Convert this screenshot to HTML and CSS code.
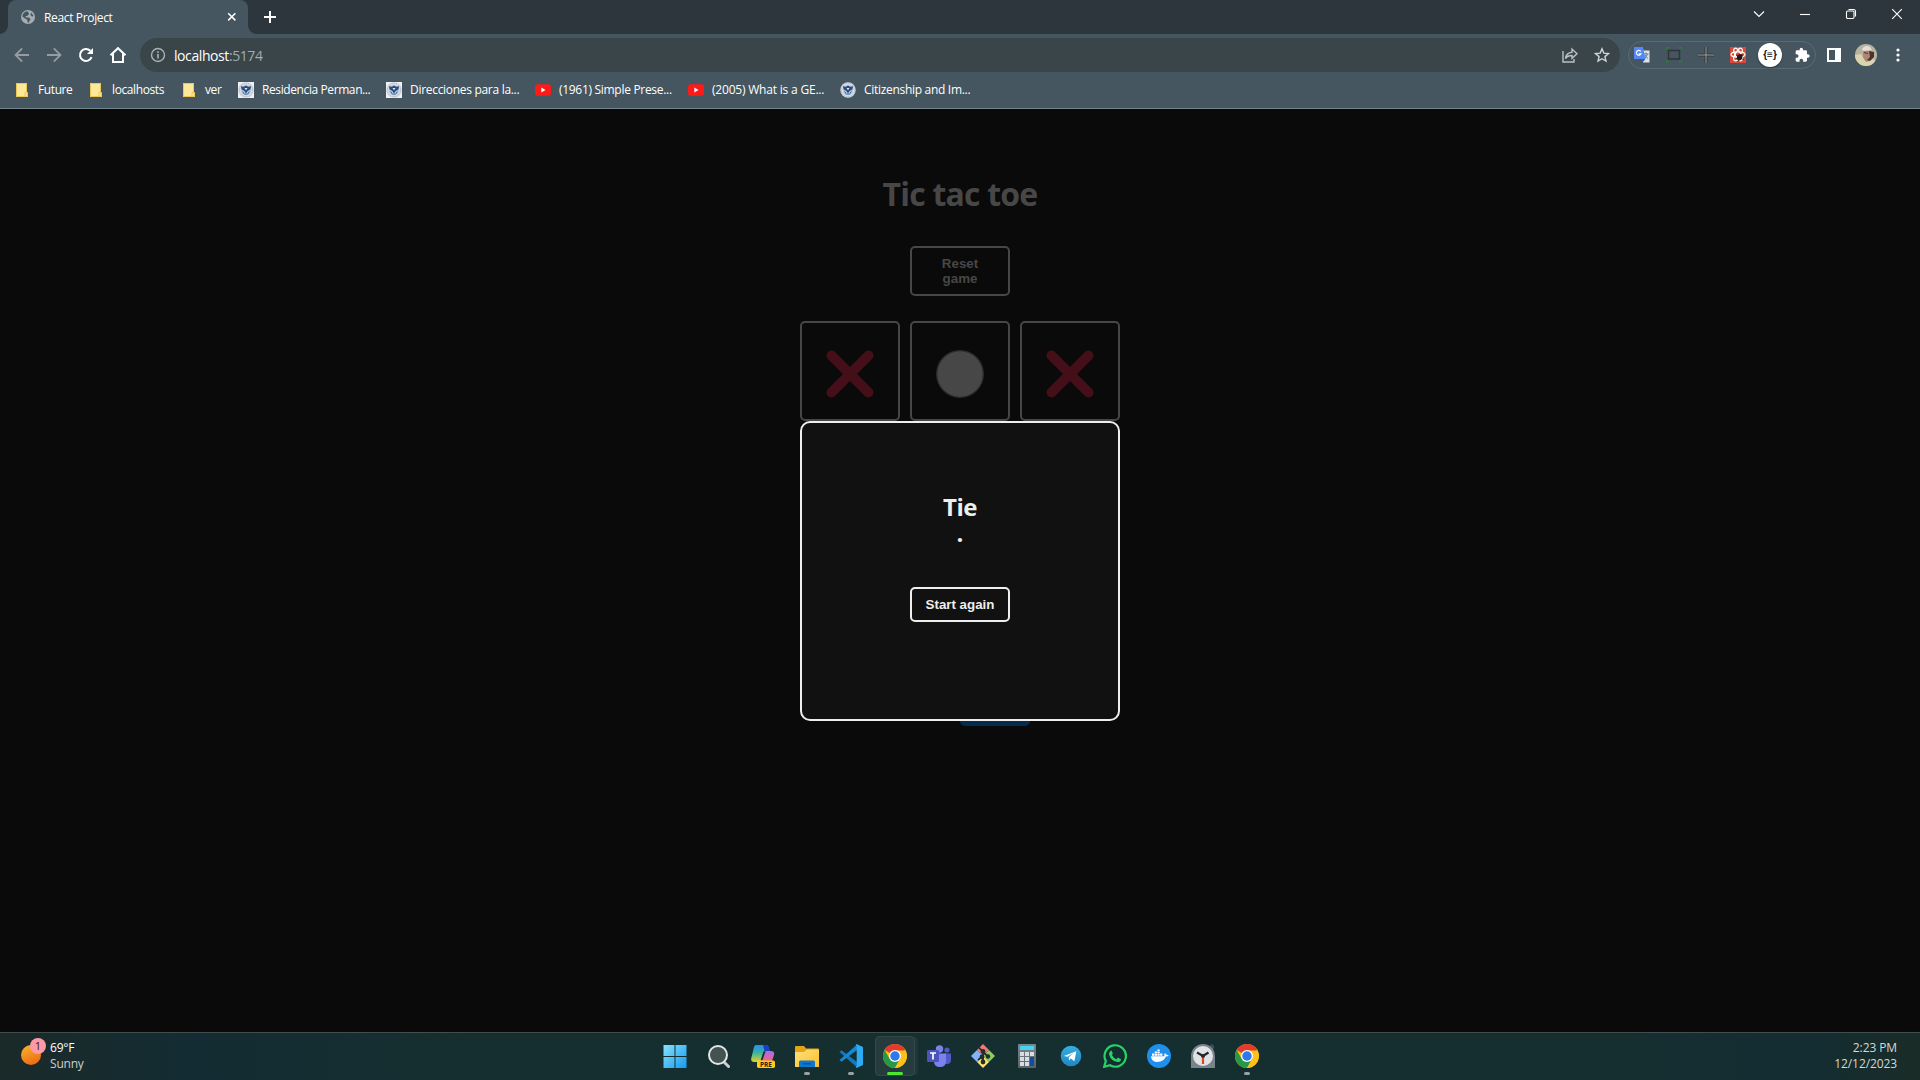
FILE: index.html
```html
<!DOCTYPE html>
<html lang="en">
<head>
<meta charset="utf-8">
<title>React Project</title>
<link rel="stylesheet" href="styles.css">
</head>
<body>
<svg class="defs" width="0" height="0" aria-hidden="true">
  <defs>
    <linearGradient id="win" gradientUnits="userSpaceOnUse" x1="0" y1="0" x2="24" y2="24"><stop offset="0" stop-color="#8ce3fd"/><stop offset="1" stop-color="#1399f0"/></linearGradient>
    <linearGradient id="sun" x1="0.2" y1="0" x2="0.6" y2="1"><stop offset="0" stop-color="#f5b32e"/><stop offset="1" stop-color="#ee6a12"/></linearGradient>
    <linearGradient id="folderFill" x1="0" y1="0" x2="1" y2="1"><stop offset="0" stop-color="#ffe07c"/><stop offset="1" stop-color="#fdbf2a"/></linearGradient>
    <linearGradient id="copA" x1="0" y1="0" x2="0" y2="1"><stop offset="0" stop-color="#2b8ff0"/><stop offset=".45" stop-color="#35b3a0"/><stop offset="1" stop-color="#e0d22e"/></linearGradient>
    <linearGradient id="copB" x1="0" y1="0" x2="0" y2="1"><stop offset="0" stop-color="#a66cf0"/><stop offset="1" stop-color="#f2657f"/></linearGradient>
    <linearGradient id="calcBody" x1="0" y1="0" x2="0" y2="1"><stop offset="0" stop-color="#7d868d"/><stop offset="1" stop-color="#59636b"/></linearGradient>
    <linearGradient id="tele" x1="0" y1="0" x2="0" y2="1"><stop offset="0" stop-color="#37aee2"/><stop offset="1" stop-color="#1e88c4"/></linearGradient>
    <symbol id="folder" viewBox="0 0 16 16"><path d="M2 1h11v9.500h1V15H2z" fill="#ffe799"/><path d="M2.500 1.500h10V10M2.500 1.500v13H13.500V10.500h-2.500v4" fill="none" stroke="#e9c856"/></symbol>
    <symbol id="seal" viewBox="0 0 16 16"><circle cx="8" cy="8" r="7.700" fill="#d9dde6"/><circle cx="8" cy="8" r="6.800" fill="none" stroke="#a3a8b8" stroke-dasharray="1 1"/><circle cx="8" cy="8" r="5.300" fill="#b9cbdd"/><path d="M2.800 4.200 6 4.800l2-1.300 2 1.300 3.200-.6-.9 3.300-2.300 1.200L8 11 6 8.700 3.700 7.500z" fill="#2a4c80"/><path d="M6.500 6h3L8 8.300z" fill="#e6edf5"/><path d="M4.700 9.500l1.800 3M11.300 9.500l-1.800 3M8 10v3" stroke="#3d6797"/></symbol>
    <symbol id="youtube" viewBox="0 0 16 16"><rect y="2.300" width="16" height="11.400" rx="2.600" fill="#ff1a1a"/><path d="M6.300 5.500v5L10.500 8z" fill="#fff"/></symbol>
    <symbol id="chrome" viewBox="0 0 48 48"><circle cx="24" cy="24" r="24" fill="#fbc116"/><path d="M24 24 3.200 12A24 24 0 0 1 44.800 12z" fill="#e33b2e"/><path d="M3.200 12A24 24 0 0 0 24 48L34.400 30 24 24 13.600 30z" fill="#279847"/><path d="M24 13h20.800A24 24 0 0 1 24 48l10-18z" fill="#fcc21b"/><circle cx="24" cy="24" r="12" fill="#fff"/><circle cx="24" cy="24" r="9.500" fill="#2e78ee"/></symbol>
  </defs>
</svg>

<header class="browser">
  <div class="tabstrip">
    <div class="tab">
      <svg width="14" height="14" viewBox="0 0 14 14"><circle cx="7" cy="7" r="7" fill="#a4adb2"/><path d="M6.500 1.300 8 3.500l-1 2-2.500.8L5 7.500h3l1.500 1.800-2 3.400-1-.1V10L4.500 8.800 1.300 6.500A6 6 0 0 1 6.500 1.300zM10 2.500l2.500 3.300-1.300 1L9.500 5z" fill="#455660"/></svg>
      <span class="tab-title">React Project</span>
      <svg width="10" height="10" viewBox="0 0 10 10" stroke="#fff" stroke-width="1.500"><path d="M1.200 1.200l7.200 7.200M8.400 1.200 1.200 8.400"/></svg>
    </div>
    <svg class="newtab" width="12" height="12" viewBox="0 0 12 12" stroke="#fff" stroke-width="2"><path d="M6 0v12M0 6h12"/></svg>
    <div class="winbtns">
      <svg viewBox="0 0 12 12"><path d="M1 3.500l5 5 5-5"/></svg>
      <svg viewBox="0 0 12 12"><path d="M1 6.500h10"/></svg>
      <svg viewBox="0 0 12 12"><rect x="1.500" y="3" width="7.500" height="7.500" rx="1.200"/><path d="M3.500 1.500h5q2 0 2 2v5"/></svg>
      <svg viewBox="0 0 12 12"><path d="M1.200 1.200l9.600 9.600M10.800 1.200l-9.600 9.600"/></svg>
    </div>
  </div>

  <div class="toolbar">
    <div class="nav">
      <svg width="16" height="16" viewBox="0 0 16 16" stroke="#939da2" stroke-width="1.800"><path d="M15 8H2M8.200 1.300 1.500 8l6.700 6.700"/></svg>
      <svg width="16" height="16" viewBox="0 0 16 16" stroke="#939da2" stroke-width="1.800"><path d="M1 8h13M7.800 1.300 14.500 8l-6.700 6.700"/></svg>
      <svg width="16" height="16" viewBox="0 0 16 16" stroke="#fff" stroke-width="2"><path d="M13.600 10.200A6 6 0 1 1 12.300 3.800"/><path d="M15 1v6H9z" fill="#fff" stroke="none"/></svg>
      <svg width="18" height="18" viewBox="0 0 18 18" stroke="#fff" stroke-width="2"><path d="M1.500 9.200 9 2.200l7.500 7M4 7.500V16h10V7.500"/></svg>
    </div>
    <div class="omnibox">
      <svg width="16" height="16" viewBox="0 0 16 16" stroke="#a9b1b5" stroke-width="1.400"><circle cx="8" cy="8" r="6.500"/><path d="M8 7v4.500M8 4.300v1.600" stroke-width="1.600"/></svg>
      <span class="url">localhost<span class="port">:5174</span></span>
      <div class="omni-actions">
        <svg width="18" height="18" viewBox="0 0 18 18" stroke="#b9c0c3" stroke-width="1.400"><path d="M2 5v11h11v-3M4.500 12.500c.5-4.500 3-6 6.500-6.300V3l5 4.700-5 4.600V9.500c-3 0-5 .8-6.500 3z"/></svg>
        <svg width="16" height="16" viewBox="0 0 16 16" stroke="#cfd4d6" stroke-width="1.400"><path d="M8 1.800l1.800 4.300 4.700.4-3.600 3.100 1.100 4.500L8 11.700l-4 2.400 1.100-4.500L1.500 6.500l4.700-.4z"/></svg>
      </div>
    </div>
    <div class="extensions">
      <svg width="16" height="16" viewBox="0 0 16 16"><path d="M8 3.500h7.500v12H9z" fill="#dce2e6"/><path d="M10 7h4.500M12 5.500V7M13.500 7q-1 3-3.500 5M11 8q1 2 3 3.500" stroke="#607d8b" fill="none"/><path d="M0 0h9l2.500 12H0z" fill="#5489f4"/><path d="M8 12h3.500L8.500 15.500z" fill="#3852c9"/><path d="M6.800 4.500A2.400 2.400 0 1 0 7 6.800H4.800" stroke="#fff" stroke-width="1.200" fill="none"/></svg>
      <svg width="16" height="16" viewBox="0 0 16 16" fill="none"><rect x="2.500" y="3.500" width="11" height="8.500" stroke="#303437" stroke-width="1.500"/><path d="M0 3V.7h3M13 .7h3V3M0 12.500v2.300h3M13 14.800h3v-2.300" stroke="#21852b" stroke-width="1.500"/></svg>
      <svg width="16" height="16" viewBox="0 0 16 16" fill="none"><path d="M8 0v16M0 8h16" stroke="#2f383d" stroke-width="3"/><path d="M8 0v16M0 8h16" stroke="#a09d99" stroke-width="1"/></svg>
      <svg width="16" height="16" viewBox="0 0 16 16" fill="none"><rect width="16" height="16" fill="#dc4936"/><g stroke="#fff" stroke-width="1.200"><ellipse cx="8" cy="7.500" rx="7" ry="2.700"/><ellipse cx="8" cy="7.500" rx="7" ry="2.700" transform="rotate(60 8 7.500)"/><ellipse cx="8" cy="7.500" rx="7" ry="2.700" transform="rotate(120 8 7.500)"/></g><ellipse cx="9.600" cy="10.200" rx="2.600" ry="3.300" transform="rotate(30 9.600 10.200)" fill="#231815"/><path d="M6 8l8 5M6 12l7-4M8 14.500l4-8" stroke="#231815" stroke-width=".8"/></svg>
      <span class="json">{≡}</span>
      <svg width="16" height="16" viewBox="0 0 24 24" fill="#fff"><path d="M21 11h-1.500V7c0-1.100-.9-2-2-2h-4V3.500a2.500 2.500 0 0 0-5 0V5h-4c-1.100 0-2 .9-2 2v3.800H4c1.500 0 2.700 1.200 2.700 2.700S5.500 16.200 4 16.200H2.500V20c0 1.100.9 2 2 2h3.800v-1.500c0-1.500 1.200-2.700 2.700-2.700s2.700 1.200 2.700 2.700V22h3.800c1.100 0 2-.9 2-2v-4H21a2.500 2.500 0 0 0 0-5z"/></svg>
    </div>
    <div class="tools">
      <svg width="14" height="14" viewBox="0 0 14 14"><path fill="#fff" fill-rule="evenodd" d="M0 0h14v14H0zM2 2v10h6V2z"/></svg>
      <svg width="22" height="22" viewBox="0 0 22 22"><clipPath id="face"><circle cx="11" cy="11" r="11"/></clipPath><g clip-path="url(#face)"><path fill="#b8b3a0" d="M0 0h22v22H0z"/><path fill="#d9d5ae" d="M0 22V11l6-1 4 7 9-2 3 7z"/><path fill="#b08772" d="M8 6l8 1 1 5-3 5-3 1-3-5z"/><path fill="#e9dfd8" d="M7 5q3-5 8-2l2 3-9 1z"/><path fill="#4a342c" d="M14 7l5 1v5l-4 4-3-1 3-3zM9 8l4 1v1L9 9z"/></g></svg>
      <svg width="4" height="14" viewBox="0 0 4 14" fill="#fff"><circle cx="2" cy="2" r="1.600"/><circle cx="2" cy="7" r="1.600"/><circle cx="2" cy="12" r="1.600"/></svg>
    </div>
  </div>

  <nav class="bookmarks">
    <a class="bm"><svg><use href="#folder"/></svg>Future</a>
    <a class="bm"><svg><use href="#folder"/></svg>localhosts</a>
    <a class="bm"><svg><use href="#folder"/></svg>ver</a>
    <a class="bm"><svg class="boxed"><use href="#seal"/></svg>Residencia Perman...</a>
    <a class="bm loose"><svg class="boxed"><use href="#seal"/></svg>Direcciones para la...</a>
    <a class="bm loose"><svg><use href="#youtube"/></svg>(1961) Simple Prese...</a>
    <a class="bm looser"><svg><use href="#youtube"/></svg>(2005) What is a GE...</a>
    <a class="bm loose"><svg><use href="#seal"/></svg>Citizenship and Im...</a>
  </nav>
</header>

<main class="page">
  <h1 class="title">Tic tac toe</h1>
  <button class="reset">Reset game</button>
  <div class="board">
    <div class="cell"><svg width="48" height="48" viewBox="0 0 48 48"><path class="cross" d="M5.500 5.500l37 37M42.500 5.500l-37 37"/></svg></div>
    <div class="cell"><svg width="48" height="48" viewBox="0 0 48 48"><circle class="disc" cx="24" cy="24" r="23.300"/></svg></div>
    <div class="cell"><svg width="48" height="48" viewBox="0 0 48 48"><path class="cross" d="M5.500 5.500l37 37M42.500 5.500l-37 37"/></svg></div>
  </div>
  <div class="turn"><span></span><span class="active"></span></div>
  <section class="modal">
    <h2 class="result">Tie</h2>
    <div class="dot">.</div>
    <button class="again">Start again</button>
  </section>
</main>

<footer class="taskbar">
  <div class="weather">
    <svg width="26" height="28" viewBox="0 0 26 28"><circle cx="10" cy="17" r="10" fill="url(#sun)"/><circle cx="17" cy="8" r="8" fill="#ff99a4"/><text x="17" y="12" text-anchor="middle" class="badge">1</text></svg>
    <div class="weather-text"><span class="temp">69°F</span><span>Sunny</span></div>
  </div>
  <div class="apps">
    <div class="app"><svg viewBox="0 0 24 24"><path fill="url(#win)" d="M.5 1h11v11H.5zM12.500 1h11v11h-11zM.5 13h11v11H.5zM12.500 13h11v11h-11z"/></svg></div>
    <div class="app"><svg viewBox="0 0 24 24"><path d="M16.500 17.500l5 5" stroke="#c9cdd0" stroke-width="3" stroke-linecap="round"/><circle cx="11" cy="11" r="9" fill="#435351" stroke="#e3e6e6" stroke-width="2"/></svg></div>
    <div class="app"><svg viewBox="0 0 24 24"><path d="M5 1h10q2 0 2.500 2l1 4h-5l-3 9q-.6 2-3 2H3q-3.500 0-2.700-4L3 3q.5-2 2-2z" fill="url(#copA)"/><path d="M12 1h3q2 0 2.500 2l1 4h-5z" fill="#193fc6"/><path d="M15 7h5q4 0 3 4l-2 6H10l3-8q.5-2 2-2z" fill="url(#copB)"/><path d="M12.500 7.500l-2.800 8.500h1.800l3-8.500z" fill="#17302f"/><rect x="6" y="16.500" width="18" height="7.500" rx="1.800" fill="#ffcb13"/><text x="15" y="22.700" text-anchor="middle" class="pre">PRE</text></svg></div>
    <div class="app"><svg viewBox="0 0 24 24"><path d="M0 3q0-1 1-1h8l2 2.500H23q1 0 1 1V12H0z" fill="#e5a413"/><path d="M0 8h9l3-2.500h11q1 0 1 1V23H0z" fill="url(#folderFill)"/><path d="M4 23v-5q0-1.500 1.500-1.500h13q1.500 0 1.500 1.500v5z" fill="#0e76cf"/><path d="M8 19.800h8" stroke="#08559b" stroke-width="1.300"/></svg><i class="run"></i></div>
    <div class="app"><svg viewBox="0 0 24 24"><path d="M.5 8 2.500 6.200 18 18v5.500z" fill="#1478bd"/><path d="M.5 16 2.500 17.800 18 6V.5z" fill="#1588d2"/><path d="M17.500 0 24 3v18l-6.500 3-.8-1.500 1-.5V2l-1-.5z" fill="#2cabf3"/></svg><i class="run"></i></div>
    <div class="app current"><svg><use href="#chrome"/></svg><i class="run"></i></div>
    <div class="app"><svg viewBox="0 0 24 24"><circle cx="20" cy="6" r="2.600" fill="#5059c9"/><path d="M16 9.500h8V16q0 4-4 4h-4z" fill="#5059c9"/><circle cx="12.500" cy="5" r="3.700" fill="#7b83eb"/><path d="M7 9.500h12V17q0 6-6 6t-6-6z" fill="#7b83eb"/><rect y="6" width="12" height="12" rx="1.200" fill="#4b53bc"/><path d="M3 9h6M6 9v6.500" stroke="#fff" stroke-width="1.700"/></svg></div>
    <div class="app"><svg viewBox="0 0 24 24"><path d="M12 0l6 6-6 6-6-6z" fill="#f07979"/><path d="M18 6l6 6-6 6-6-6z" fill="#8ccf5d"/><path d="M12 12l6 6-6 6-6-6z" fill="#ffe36e"/><path d="M6 6l6 6-6 6-6-6z" fill="#82b4fa"/><path d="M8 3.500l4 4.500v10M12 8l5 4.500M12 12l-5 4" stroke="#242c2c" stroke-width="1.800" fill="none"/><g fill="#242c2c"><circle cx="12" cy="7.500" r="2.400"/><circle cx="17" cy="12.500" r="2.200"/><circle cx="12" cy="18" r="2.400"/><circle cx="11" cy="13" r="2.400"/></g></svg></div>
    <div class="app"><svg viewBox="0 0 24 24"><rect x="3" width="18" height="24" rx="1" fill="url(#calcBody)"/><path d="M5 2h14v4H5z" fill="#41d5f1"/><path d="M5 8h4v4H5zM10 8h4v4h-4zM15 8h4v4h-4zM5 13h4v4H5zM10 13h4v4h-4zM5 18h4v4H5zM10 18h4v4h-4z" fill="#d8dde0"/><path d="M15 13h4v9h-4z" fill="#114f9c"/></svg></div>
    <div class="app"><svg viewBox="0 0 24 24"><circle cx="12" cy="12" r="10.300" fill="url(#tele)"/><path d="M4.800 12 17.300 7.200 15.400 17.300l-3.600-2.700-1.800 1.900-.3-3.200 5-4.400-6.200 3.900z" fill="#fff"/></svg></div>
    <div class="app"><svg viewBox="0 0 24 24"><path d="M1.200 22.800 2.800 17A10.700 10.700 0 1 1 7 21.300z" fill="none" stroke="#25d366" stroke-width="2.200"/><path d="M8.300 6.200 9.900 9.500 8.900 11q1.500 3 4.500 4.200l1.500-1.600 3.200 1.600q-.5 3-3.500 2.900-6.500-.7-8.600-7.500-.3-2.700 2.300-4.400z" fill="#25d366"/></svg></div>
    <div class="app"><svg viewBox="0 0 24 24"><circle cx="12" cy="12" r="12" fill="#1d90ed"/><path d="M4 12.200h13.500q-.8-2 .5-3.300 1 .8 1.200 1.900 1.600-.3 2.600.4-.9 1.500-2.900 1.400-2.400 5.400-8.400 5.400T4 12.200z" fill="#fff"/><path d="M5 9.500h2.300v2.300H5zM7.700 9.500H10v2.300H7.700zM10.400 9.500h2.300v2.300h-2.300zM13.100 9.500h2.300v2.300h-2.300zM7.700 7.500H10v1.600H7.700zM10.400 7.500h2.300v1.600h-2.300zM10.400 5.400h2.300v1.700h-2.300z" fill="#fff"/></svg></div>
    <div class="app"><svg viewBox="0 0 24 24"><path d="M0 24V12A12 12 0 0 1 12 0q4 0 7 2l2-1.500 2 2L22 5q2 3 2 7v12z" fill="#7a838b"/><path d="M18.500 1.500 21 .3l2 2.200-1.200 2.300z" fill="#424a51"/><circle cx="12" cy="12" r="10" fill="#dfe3e5"/><path d="M6 8.500l6 3.500 5.500-3.500" stroke="#24292d" stroke-width="2.300" fill="none"/><path d="M12 14v6" stroke="#dc481c" stroke-width="2.200"/><circle cx="12" cy="12" r="2" fill="#24292d"/></svg></div>
    <div class="app"><svg><use href="#chrome"/></svg><i class="run"></i></div>
  </div>
  <div class="clock"><span>2:23 PM</span><span>12/12/2023</span></div>
</footer>
</body>
</html>
```

FILE: styles.css
```css
* { box-sizing: border-box; }
html, body { margin: 0; height: 100%; overflow: hidden; }
body {
  display: flex;
  flex-direction: column;
  height: 1080px;
  background: #0a0a0a;
  font-family: "Open Sans", "Noto Sans", sans-serif;
  font-size: 12px;
  color: #fff;
}
svg { display: block; flex: none; }
svg[stroke] { fill: none; }
.defs { position: absolute; }

.browser { height: 109px; flex: none; background: #455660; border-bottom: 1px solid #76858d; }
.tabstrip { display: flex; align-items: center; height: 34px; background: #2c363c; }
.tab {
  position: relative;
  display: flex;
  align-items: center;
  width: 240px;
  height: 34px;
  margin-left: 8px;
  padding: 0 11px 0 13px;
  background: #455660;
  border-radius: 8px 8px 0 0;
}
.tab::before, .tab::after {
  content: "";
  position: absolute;
  bottom: 0;
  width: 8px;
  height: 8px;
}
.tab::before { left: -8px; background: radial-gradient(circle at 0 0, transparent 7.500px, #455660 8px); }
.tab::after { right: -8px; background: radial-gradient(circle at 100% 0, transparent 7.500px, #455660 8px); }
.tab-title { flex: 1; margin-left: 9px; letter-spacing: -0.35px; }
.newtab { margin-left: 16px; }
.winbtns { display: flex; margin-left: auto; height: 28px; align-self: flex-start; }
.winbtns svg { width: 46px; height: 12px; margin: 8px 0; fill: none; stroke: #fff; stroke-width: 1.100; }

.toolbar { display: flex; align-items: center; height: 42px; }
.nav { display: grid; grid-template-columns: repeat(4, 32px); justify-items: center; align-items: center; margin-left: 6px; }
.omnibox {
  display: flex;
  align-items: center;
  width: 1480px;
  height: 34px;
  margin-left: 6px;
  padding: 0 10px;
  border-radius: 17px;
  background: #394549;
}
.url { margin-left: 8px; font-size: 14px; letter-spacing: -0.42px; }
.port { color: #a3abaf; }
.omni-actions { display: flex; align-items: center; gap: 15px; margin-left: auto; }
.extensions {
  display: grid;
  grid-template-columns: repeat(6, 32px);
  justify-items: center;
  justify-content: center;
  align-items: center;
  width: 188px;
  height: 28px;
  margin-left: 8px;
  border: 1px solid #596a72;
  border-radius: 14px;
}
.json {
  width: 24px;
  height: 24px;
  border-radius: 50%;
  background: #fff;
  color: #111;
  font: bold 10px/23px "Liberation Sans", sans-serif;
  text-align: center;
  box-shadow: 0 1px 2px #0006;
}
.tools { display: grid; grid-template-columns: repeat(3, 32px); justify-items: center; align-items: center; margin-left: 2px; }

.bookmarks {
  display: grid;
  grid-template-columns: 58px 77px 41px 132px 133px 137px 136px 130px;
  column-gap: 16px;
  height: 28px;
  padding-left: 14px;
}
.bm { display: flex; align-items: center; gap: 8px; padding-bottom: 2px; white-space: nowrap; letter-spacing: -0.4px; }
.loose { letter-spacing: -0.3px; }
.looser { letter-spacing: -0.2px; }
.bm svg { width: 16px; height: 16px; margin-top: 2px; }
.boxed { background: #eef0f3; }

.page { position: relative; flex: 1; display: flex; flex-direction: column; align-items: center; }
.title { margin: 63px 0 0; font-size: 32px; line-height: 44px; font-weight: 700; letter-spacing: -0.8px; color: #474747; }
button {
  width: 100px;
  border: 2px solid #474747;
  border-radius: 5px;
  background: transparent;
  color: #474747;
  font: bold 13.333px/15px "Liberation Sans", Arial, sans-serif;
}
.reset { height: 50px; margin-top: 30px; padding: 8px 12px; }
.board { display: grid; grid-template-columns: repeat(3, 100px); gap: 10px; margin-top: 25px; }
.cell { display: flex; align-items: center; justify-content: center; height: 100px; padding-top: 6px; border: 2px solid #474747; border-radius: 5px; }
.cross { stroke: #450f1a; stroke-width: 10; stroke-linecap: round; }
.disc { fill: #474747; stroke: #2c2c2c; stroke-width: 1.300; }
.turn { display: grid; grid-template-columns: 70px 70px; height: 70px; margin-top: 235px; }
.turn span { border-radius: 5px; }
.turn .active { background: #072b4c; }
.modal {
  position: absolute;
  top: 312px;
  left: 800px;
  display: flex;
  flex-direction: column;
  align-items: center;
  width: 320px;
  height: 300px;
  padding-top: 67px;
  border: 2px solid #eee;
  border-radius: 10px;
  background: #111;
  color: #eee;
}
.result { margin: 0; font-size: 24px; line-height: 34px; letter-spacing: -0.5px; }
.dot { height: 32px; font-size: 24px; font-weight: 700; line-height: 17px; }
.again { height: 35px; margin-top: 31px; padding: 0; border-color: #eee; color: #eee; }

.taskbar {
  display: grid;
  grid-template-columns: 653px 616px 1fr;
  flex: none;
  height: 48px;
  border-top: 1px solid #414d4c;
  background: linear-gradient(90deg, #1b2a29 0, #132c33 10%, #152f30 25%, #152e30 85%, #132d33 94%, #1a2c27 100%);
}
.weather { display: flex; padding: 5px 0 0 21px; }
.weather-text { display: flex; flex-direction: column; margin: 2px 0 0 3px; line-height: 16px; letter-spacing: -0.2px; color: #cbd0d0; }
.temp { color: #fff; }
.badge { font-size: 11px; fill: #33211f; }
.apps { display: grid; grid-template-columns: repeat(14, 44px); }
.app { position: relative; display: flex; align-items: center; justify-content: center; height: 46px; }
.app svg { width: 24px; height: 24px; }
.pre { font: bold 6.500px "Open Sans", sans-serif; fill: #2b2308; }
.current::before {
  content: "";
  position: absolute;
  inset: 3px 2px 3px;
  border: 1px solid #344849;
  border-radius: 4px;
  background: #253b3d;
  box-shadow: 4px 0 0 -1px #203739;
}
.current svg { position: relative; }
.run { position: absolute; left: 19px; bottom: 4px; width: 6px; height: 3px; border-radius: 2px; background: #98a3a3; }
.current .run { left: 14px; width: 16px; background: #4be82d; }
.clock { display: flex; flex-direction: column; align-items: flex-end; padding: 7px 23px 0 0; line-height: 16px; letter-spacing: -0.1px; color: #d3d8d8; }
```
